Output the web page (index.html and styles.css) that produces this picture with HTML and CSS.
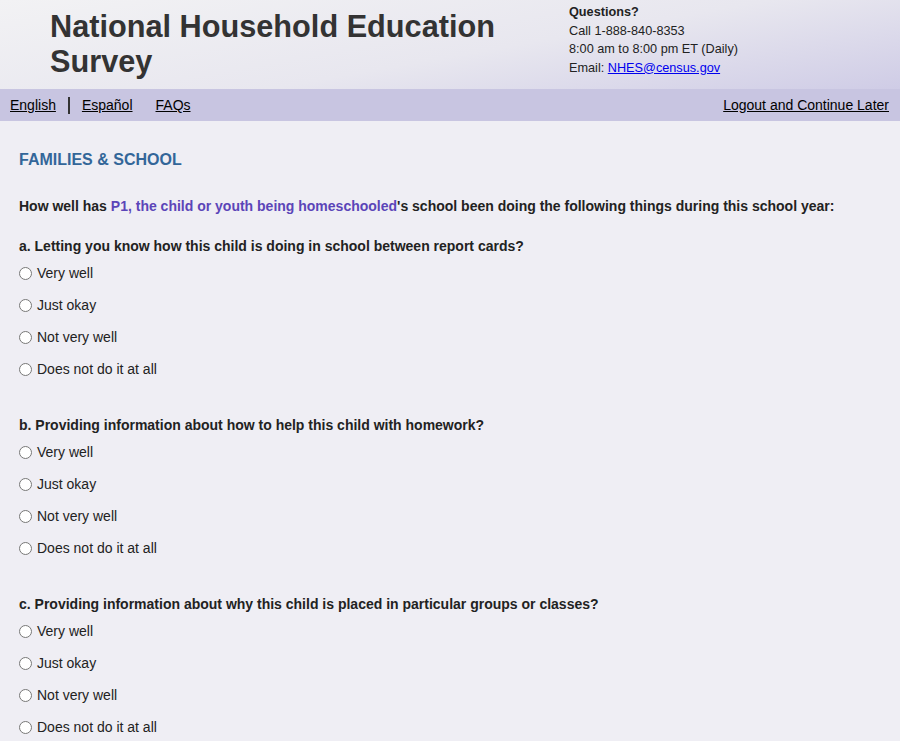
FILE: index.html
```html
<!DOCTYPE html>
<html lang="en">
<head>
    <meta charset="utf-8">
    <title>National Household Education Survey</title>
    <link rel="stylesheet" href="styles.css">
</head>
<body>
    <header class="banner">
        <h1 class="title">National Household Education<br>Survey</h1>
        <div class="contact">
            <div class="contact-head">Questions?</div>
            <div>Call 1-888-840-8353</div>
            <div>8:00 am to 8:00 pm ET (Daily)</div>
            <div>Email: <a href="#" class="mail">NHES@census.gov</a></div>
        </div>
    </header>
    <nav class="navbar">
        <div class="nav-left">
            <a href="#">English</a>
            <span class="sep"></span>
            <a href="#">Español</a>
            <a href="#" class="faq">FAQs</a>
        </div>
        <a href="#">Logout and Continue Later</a>
    </nav>
    <main class="content">
        <h2 class="section">FAMILIES &amp; SCHOOL</h2>
        <p class="intro">How well has <span class="person">P1, the child or youth being homeschooled</span>'s school been doing the following things during this school year:</p>

        <div class="question">
            <p class="q-text">a. Letting you know how this child is doing in school between report cards?</p>
            <label class="opt"><input type="radio" name="qa"> Very well</label>
            <label class="opt"><input type="radio" name="qa"> Just okay</label>
            <label class="opt"><input type="radio" name="qa"> Not very well</label>
            <label class="opt"><input type="radio" name="qa"> Does not do it at all</label>
        </div>

        <div class="question">
            <p class="q-text">b. Providing information about how to help this child with homework?</p>
            <label class="opt"><input type="radio" name="qb"> Very well</label>
            <label class="opt"><input type="radio" name="qb"> Just okay</label>
            <label class="opt"><input type="radio" name="qb"> Not very well</label>
            <label class="opt"><input type="radio" name="qb"> Does not do it at all</label>
        </div>

        <div class="question">
            <p class="q-text">c. Providing information about why this child is placed in particular groups or classes?</p>
            <label class="opt"><input type="radio" name="qc"> Very well</label>
            <label class="opt"><input type="radio" name="qc"> Just okay</label>
            <label class="opt"><input type="radio" name="qc"> Not very well</label>
            <label class="opt"><input type="radio" name="qc"> Does not do it at all</label>
        </div>
    </main>
</body>
</html>
```

FILE: styles.css
```css
body {
    margin: 0;
    background-color: #efeef4;
    font-family: "Liberation Sans", Arial, sans-serif;
    color: #222;
}

.banner {
    display: flex;
    justify-content: space-between;
    height: 89px;
    background: linear-gradient(170deg, #f2f2f4 0%, #e8e7ef 55%, #cfcce6 100%);
}

.title {
    margin: 9px 0 0 50px;
    font-size: 30.7px;
    line-height: 35px;
    font-weight: bold;
    color: #333;
}

.contact {
    width: 331px;
    padding-top: 3px;
    font-size: 12.7px;
    line-height: 18.5px;
    color: #222;
}

.contact-head {
    font-weight: bold;
}

.mail {
    color: #0000ee;
}

.navbar {
    display: flex;
    justify-content: space-between;
    align-items: center;
    height: 32px;
    padding: 0 11px 0 10px;
    background-color: #c8c5e1;
    font-size: 14px;
}

.navbar a {
    color: #000;
}

.nav-left {
    display: flex;
    align-items: center;
}

.sep {
    width: 2px;
    height: 17px;
    margin: 0 12px;
    background-color: #333;
}

.faq {
    margin-left: 23px;
}

.content {
    padding: 30px 19px 20px 19px;
}

.section {
    margin: 0;
    font-size: 16px;
    line-height: 18px;
    color: #336699;
}

.intro {
    margin: 29px 0 24px 0;
    font-size: 14px;
    font-weight: bold;
    line-height: 16px;
    color: #222;
}

.person {
    color: #5b45b8;
}

.question {
    margin-bottom: 32px;
}

.q-text {
    margin: 0 0 3px 0;
    font-size: 14px;
    font-weight: bold;
    line-height: 16px;
}

.opt {
    display: flex;
    align-items: center;
    height: 32px;
    font-size: 14px;
    color: #222;
}

.opt input {
    width: 13px;
    height: 13px;
    margin: 0 5px 0 0;
}
```
